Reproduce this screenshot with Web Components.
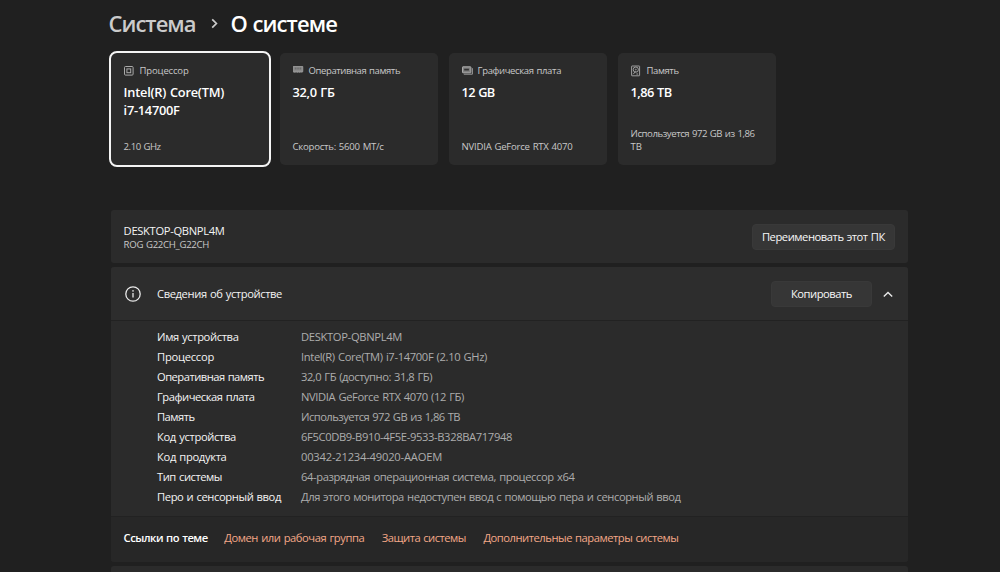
<!DOCTYPE html>
<html lang="ru">
<head>
<meta charset="utf-8">
<title>О системе</title>
<style>
    html, body {
        margin: 0;
        height: 100%;
        overflow: hidden;
        background: #202020;
    }
    body {
        font-family: "Open Sans", "Noto Sans", sans-serif;
        font-size: 11.2px;
        line-height: 20px;
        word-spacing: .7px;
        color: #f4f4f4;
    }
</style>
</head>
<body>
<about-page>
    <bread-crumb slot="title">
        <fit-text slot="parent" width="87">Система</fit-text>
        <fit-text width="106.5">О системе</fit-text>
    </bread-crumb>

    <spec-card slot="cards" icon="cpu" selected>
        <fit-text slot="label" width="49">Процессор</fit-text>
        <fit-text width="100.5">Intel(R) Core(TM)</fit-text>
        <fit-text width="56">i7-14700F</fit-text>
        <fit-text slot="note" width="37">2.10 GHz</fit-text>
    </spec-card>
    <spec-card slot="cards" icon="ram">
        <fit-text slot="label" width="91.5">Оперативная память</fit-text>
        <fit-text width="42">32,0 ГБ</fit-text>
        <fit-text slot="note" width="91">Скорость: 5600 МТ/с</fit-text>
    </spec-card>
    <spec-card slot="cards" icon="gpu">
        <fit-text slot="label" width="83.5">Графическая плата</fit-text>
        <fit-text width="33">12 GB</fit-text>
        <fit-text slot="note" width="111">NVIDIA GeForce RTX 4070</fit-text>
    </spec-card>
    <spec-card slot="cards" icon="disk">
        <fit-text slot="label" width="32">Память</fit-text>
        <fit-text width="41">1,86 TB</fit-text>
        <fit-text slot="note" width="124">Используется 972 GB из 1,86</fit-text>
        <fit-text slot="note" width="11">TB</fit-text>
    </spec-card>

    <device-bar>
        <fit-text slot="name" width="101">DESKTOP-QBNPL4M</fit-text>
        <fit-text slot="model" width="85.5">ROG G22CH_G22CH</fit-text>
        <push-button style="width: 143px"><fit-text width="123">Переименовать этот ПК</fit-text></push-button>
    </device-bar>

    <info-expander>
        <fit-text slot="title" width="125">Сведения об устройстве</fit-text>
        <push-button slot="action" style="width: 101px"><fit-text width="61">Копировать</fit-text></push-button>
        <info-row><fit-text slot="key" width="81.5">Имя устройства</fit-text><fit-text width="101">DESKTOP-QBNPL4M</fit-text></info-row>
        <info-row><fit-text slot="key" width="57">Процессор</fit-text><fit-text width="186">Intel(R) Core(TM) i7-14700F (2.10 GHz)</fit-text></info-row>
        <info-row><fit-text slot="key" width="107">Оперативная память</fit-text><fit-text width="131">32,0 ГБ (доступно: 31,8 ГБ)</fit-text></info-row>
        <info-row><fit-text slot="key" width="97.5">Графическая плата</fit-text><fit-text width="163">NVIDIA GeForce RTX 4070 (12 ГБ)</fit-text></info-row>
        <info-row><fit-text slot="key" width="37.5">Память</fit-text><fit-text width="159">Используется 972 GB из 1,86 TB</fit-text></info-row>
        <info-row><fit-text slot="key" width="79">Код устройства</fit-text><fit-text width="211">6F5C0DB9-B910-4F5E-9533-B328BA717948</fit-text></info-row>
        <info-row><fit-text slot="key" width="69.5">Код продукта</fit-text><fit-text width="141">00342-21234-49020-AAOEM</fit-text></info-row>
        <info-row><fit-text slot="key" width="65">Тип системы</fit-text><fit-text width="273.5">64-разрядная операционная система, процессор x64</fit-text></info-row>
        <info-row><fit-text slot="key" width="124">Перо и сенсорный ввод</fit-text><fit-text width="379.5">Для этого монитора недоступен ввод с помощью пера и сенсорный ввод</fit-text></info-row>
        <link-bar slot="footer">
            <fit-text slot="title" width="84">Ссылки по теме</fit-text>
            <fit-text width="140">Домен или рабочая группа</fit-text>
            <fit-text width="84">Защита системы</fit-text>
            <fit-text width="195">Дополнительные параметры системы</fit-text>
        </link-bar>
    </info-expander>
    <next-panel></next-panel>
</about-page>

<script>
class BaseElement extends HTMLElement {
    constructor(){
        super();
        this.attachShadow({ mode: "open" });
        this.shadowRoot.innerHTML = `<style>${this.getStyle()}</style>${this.getContentHTML()}`;
    }
    getStyle(){
        return ":host { display: block; }";
    }
    getContentHTML(){
        return "<slot></slot>";
    }
}

class AboutPage extends BaseElement {
    getStyle(){
        return `
            :host {
                display: flex;
                flex-direction: column;
                width: 796.5px;
                margin-left: 111px;
            }
            #cards {
                display: grid;
                grid-template-columns: repeat(4, 158px);
                grid-auto-rows: 112px;
                gap: 11px;
                margin: 15px 0 45px;
            }
            #panels {
                display: flex;
                flex-direction: column;
                gap: 4px;
            }
        `;
    }
    getContentHTML(){
        return `
            <slot name="title"></slot>
            <div id="cards"><slot name="cards"></slot></div>
            <div id="panels"><slot></slot></div>
        `;
    }
}
customElements.define("about-page", AboutPage);

class BreadCrumb extends BaseElement {
    getStyle(){
        return `
            :host {
                display: flex;
                align-items: center;
                height: 30px;
                padding-top: 8px;
                margin-left: -2.5px;
                font-size: 22px;
                font-weight: 600;
                line-height: 30px;
                color: #fff;
            }
            #parent { color: #cbcbcb; }
            svg { margin: 1px 12px 0 14px; }
        `;
    }
    getContentHTML(){
        return `
            <span id="parent"><slot name="parent"></slot></span>
            <svg width="9" height="11" viewBox="0 0 9 11" fill="none" stroke="#cbcbcb" stroke-width="1.7"><path d="M2.2 1.3 6.4 5.5 2.2 9.7"/></svg>
            <slot></slot>
        `;
    }
}
customElements.define("bread-crumb", BreadCrumb);

const cardIcons = {
    cpu: `
        <rect x=".5" y="1.5" width="8.6" height="8.6" rx="1"/>
        <rect x="2.9" y="3.9" width="3.8" height="3.8"/>
    `,
    ram: `
        <path d="M.2 1.5h9.6v5.2H.2z" fill="#8c8c8c" stroke="#aaa" stroke-width=".7"/>
        <path d="M2.3 2.5v2M4.1 2.5v2M5.9 2.5v2M7.7 2.5v2" stroke="#555" stroke-width=".7"/>
        <path d="M.6 7.2h8.8" stroke-dasharray="1.3 .4" stroke-width=".8"/>
    `,
    gpu: `
        <rect x=".5" y="1.8" width="8.4" height="6" rx=".4" fill="#808080"/>
        <path d="M2.2 3.7h4.7v1.8H2.2z" fill="#333" stroke="none"/>
        <path d="M1.8 9.2h8.6V3.2" stroke="#999" stroke-width="1"/>
    `,
    disk: `
        <rect x=".6" y="1" width="8" height="9.8" rx=".4" stroke-width=".9"/>
        <circle cx="4.8" cy="4.6" r="2.6" stroke-width=".9"/>
        <circle cx="4.8" cy="4.6" r=".5" stroke-width=".7"/>
        <path d="M2.2 9.2 4.6 6.4M5.4 9h1.7" stroke-width=".9"/>
    `
};

class SpecCard extends BaseElement {
    getStyle(){
        return `
            :host {
                display: flex;
                flex-direction: column;
                box-sizing: border-box;
                padding: 11.4px 13px 11.6px 12.6px;
                border-radius: 5px;
                background: #2b2b2b;
            }
            :host([selected]) {
                outline: 2px solid #f4f4f4;
                outline-offset: 0;
                border-radius: 6px;
            }
            #label {
                display: flex;
                gap: 5px;
                font-size: 9.5px;
                line-height: 13px;
                color: #c8c8c8;
            }
            #label svg { margin-top: .6px; }
            #value {
                display: flex;
                flex-direction: column;
                flex: 1;
                margin-top: 6.6px;
                font-size: 12.8px;
                font-weight: 600;
                line-height: 17.6px;
                color: #fff;
            }
            #note {
                display: flex;
                flex-direction: column;
                font-size: 9.6px;
                line-height: 12.7px;
                color: #c8c8c8;
            }
        `;
    }
    getContentHTML(){
        return `
            <div id="label">
                <svg width="11" height="12" viewBox="0 0 11 12" fill="none" stroke="#aaa">${cardIcons[this.getAttribute("icon")]}</svg>
                <slot name="label"></slot>
            </div>
            <div id="value"><slot></slot></div>
            <div id="note"><slot name="note"></slot></div>
        `;
    }
}
customElements.define("spec-card", SpecCard);

class PushButton extends BaseElement {
    getStyle(){
        return `
            :host {
                display: flex;
                align-items: center;
                justify-content: center;
                box-sizing: border-box;
                height: 26px;
                border: 1px solid #393939;
                border-radius: 4px;
                background: #363636;
                color: #f8f8f8;
            }
        `;
    }
}
customElements.define("push-button", PushButton);

class DeviceBar extends BaseElement {
    getStyle(){
        return `
            :host {
                display: flex;
                align-items: center;
                justify-content: space-between;
                box-sizing: border-box;
                height: 53px;
                padding: 0 12.6px;
                border-radius: 3px;
                background: #2b2b2b;
            }
            #names {
                display: flex;
                flex-direction: column;
                padding-top: 2px;
                line-height: 14px;
            }
            #model {
                font-size: 9.6px;
                line-height: 13px;
                color: #c8c8c8;
            }
        `;
    }
    getContentHTML(){
        return `
            <div id="names">
                <slot name="name"></slot>
                <div id="model"><slot name="model"></slot></div>
            </div>
            <slot></slot>
        `;
    }
}
customElements.define("device-bar", DeviceBar);

class InfoExpander extends BaseElement {
    getStyle(){
        return `
            :host {
                display: block;
                border-radius: 3px;
                background: #2b2b2b;
                overflow: hidden;
            }
            #header {
                display: flex;
                align-items: center;
                height: 53px;
                padding: 0 13.5px;
                background: #2d2d2d;
                border-bottom: 1px solid #222;
            }
            #title {
                flex: 1;
                margin-left: 16.5px;
            }
            #chevron { margin-left: 10px; }
            #rows {
                padding: 6px 0 9px 46px;
            }
        `;
    }
    getContentHTML(){
        return `
            <div id="header">
                <svg width="16" height="16" viewBox="0 0 16 16" fill="none" stroke="#e8e8e8" stroke-width="1.3">
                    <circle cx="8" cy="8" r="7.2"/>
                    <path d="M8 6.9v4.6"/>
                    <circle cx="8" cy="4.9" r=".8" fill="#e8e8e8" stroke="none"/>
                </svg>
                <div id="title"><slot name="title"></slot></div>
                <slot name="action"></slot>
                <svg id="chevron" width="12" height="10" viewBox="0 0 12 10" fill="none" stroke="#e8e8e8" stroke-width="1.4"><path d="M1.8 7.6 6 3.4l4.2 4.2"/></svg>
            </div>
            <div id="rows"><slot></slot></div>
            <slot name="footer"></slot>
        `;
    }
}
customElements.define("info-expander", InfoExpander);

class InfoRow extends BaseElement {
    getStyle(){
        return `
            :host {
                display: grid;
                grid-template-columns: 144px 1fr;
                height: 20px;
            }
            #value { color: #adadad; }
        `;
    }
    getContentHTML(){
        return `
            <div><slot name="key"></slot></div>
            <div id="value"><slot></slot></div>
        `;
    }
}
customElements.define("info-row", InfoRow);

class LinkBar extends BaseElement {
    getStyle(){
        return `
            :host {
                display: flex;
                align-items: center;
                box-sizing: border-box;
                height: 46px;
                padding: 0 12.6px 4px;
                gap: 17.6px;
                border-top: 1px solid #222;
                background: #272727;
                color: #f4a887;
            }
            #title {
                margin-right: -1px;
                font-weight: 600;
                color: #fff;
            }
        `;
    }
    getContentHTML(){
        return `
            <div id="title"><slot name="title"></slot></div>
            <slot></slot>
        `;
    }
}
customElements.define("link-bar", LinkBar);

class NextPanel extends BaseElement {
    getStyle(){
        return `
            :host {
                display: block;
                height: 20px;
                border-radius: 3px;
                background: #2b2b2b;
            }
        `;
    }
}
customElements.define("next-panel", NextPanel);

//one line of text, tracked so that it fills the given width
//defined last, its parents have to be laid out when it measures itself
class FitText extends BaseElement {
    getStyle(){
        return `
            :host {
                display: block;
                white-space: nowrap;
            }
            #run { display: inline-block; vertical-align: top; }
        `;
    }
    getContentHTML(){
        return `<span id="run"><slot></slot></span>`;
    }
    connectedCallback(){
        const run = this.shadowRoot.querySelector("#run");
        const width = Number(this.getAttribute("width"));
        const spacing = (width - run.getBoundingClientRect().width) / this.textContent.length;
        run.style.letterSpacing = `${spacing.toFixed(3)}px`;
        this.style.width = `${width}px`;
    }
}
customElements.define("fit-text", FitText);
</script>
</body>
</html>
